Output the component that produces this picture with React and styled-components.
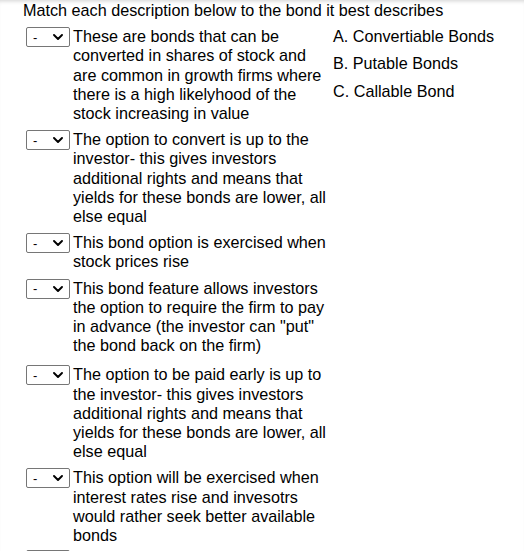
import styled, { createGlobalStyle } from "styled-components";

const Global = createGlobalStyle`
  html, body {
    margin: 0;
    padding: 0;
    background: #fff;
  }
  body {
    font-family: "Liberation Sans", Arial, sans-serif;
    color: #000;
  }
`;

// gap below each row, read off the reference
const items = [
  { text: "These are bonds that can be converted in shares of stock and are common in growth firms where there is a high likelyhood of the stock increasing in value", gap: 7 },
  { text: "The option to convert is up to the investor- this gives investors additional rights and means that yields for these bonds are lower, all else equal", gap: 7 },
  { text: "This bond option is exercised when stock prices rise", gap: 7 },
  { text: "This bond feature allows investors the option to require the firm to pay in advance (the investor can \"put\" the bond back on the firm)", gap: 10 },
  { text: "The option to be paid early is up to the investor- this gives investors additional rights and means that yields for these bonds are lower, all else equal", gap: 7 },
  { text: "This option will be exercised when interest rates rise and invesotrs would rather seek better available bonds", gap: 5 },
  { text: "", gap: 0 },
];

const answers = ["A. Convertiable Bonds", "B. Putable Bonds", "C. Callable Bond"];

const Chevron = () => (
  <ChevronIcon width="10" height="6" viewBox="0 0 10 6" aria-hidden="true">
    <path d="M1 1 L5 5 L9 1" fill="none" stroke="#000" strokeWidth="1.9" strokeLinecap="round" strokeLinejoin="round" />
  </ChevronIcon>
);

export default function App() {
  return (
    <>
      <Global />
      <Page>
        <Heading>Match each description below to the bond it best describes</Heading>
        <Body>
          <ItemList>
            {items.map((it, i) => (
              <Row key={i} $gap={it.gap}>
                <PickWrap>
                  <Pick defaultValue="-">
                    <option>-</option>
                    <option>A</option>
                    <option>B</option>
                    <option>C</option>
                  </Pick>
                  <Chevron />
                </PickWrap>
                <Desc>{it.text}</Desc>
              </Row>
            ))}
          </ItemList>
          <Answers>
            {answers.map((a) => (
              <Answer key={a}>{a}</Answer>
            ))}
          </Answers>
        </Body>
      </Page>
    </>
  );
}

const Page = styled.div`
  height: 551px;
  overflow: hidden;
  padding: 1px 0 0 23px;
  box-sizing: border-box;
  box-shadow: inset 0 4px 4px -3px rgba(0, 0, 0, 0.18);
  font-size: 16.2px;
  line-height: 19.2px;
`;

const Heading = styled.div`
  margin: 0 0 7px;
  white-space: nowrap;
`;

const Body = styled.div`
  display: flex;
  align-items: flex-start;
`;

const ItemList = styled.div`
  display: flex;
  flex-direction: column;
  padding-left: 3px;
  width: 307px;
`;

const Row = styled.div`
  display: flex;
  align-items: flex-start;
  gap: 3px;
  margin-bottom: ${(p) => p.$gap}px;
`;

const PickWrap = styled.div`
  position: relative;
  flex: none;
  width: 44px;
  height: 20px;
`;

const Pick = styled.select`
  appearance: none;
  -webkit-appearance: none;
  display: block;
  width: 44px;
  height: 20px;
  margin: 0;
  padding: 0 0 0 6px;
  font-family: "Liberation Sans", Arial, sans-serif;
  font-size: 13px;
  color: #000;
  background: #fff;
  border: 1px solid #767676;
  border-radius: 2px;
`;

const ChevronIcon = styled.svg`
  position: absolute;
  left: 27px;
  top: 7px;
  pointer-events: none;
`;

const Desc = styled.div`
  width: 259px;
`;

const Answers = styled.div`
  display: flex;
  flex-direction: column;
  gap: 8px;
`;

const Answer = styled.div`
  white-space: nowrap;
`;
